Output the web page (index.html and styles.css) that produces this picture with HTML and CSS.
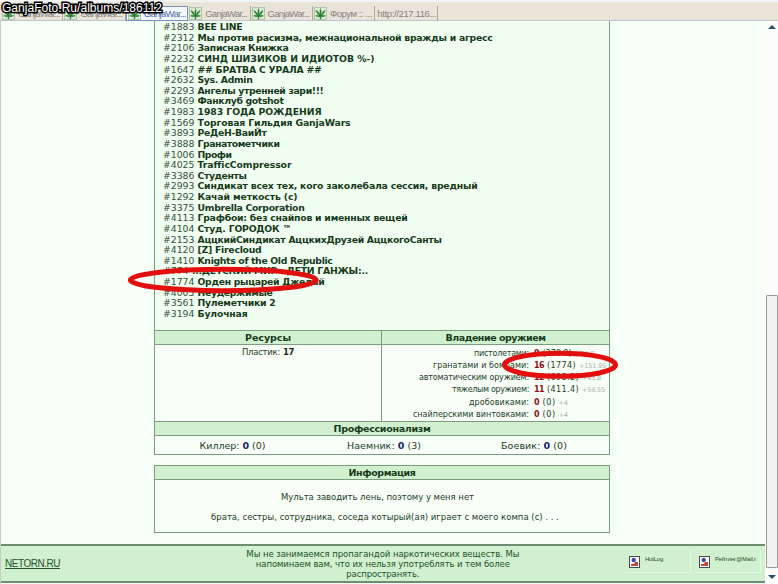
FILE: index.html
```html
<!DOCTYPE html>
<html lang="ru">
<head>
<meta charset="utf-8">
<title>GanjaWars</title>
<link rel="stylesheet" href="styles.css">
</head>
<body>
<svg width="0" height="0" class="defs"><defs>
<symbol id="leaf" viewBox="0 0 14 14"><rect x=".5" y=".5" width="13" height="13" fill="#d9ead5" stroke="#a9c4a5"/><path d="M7 1.5Q8.3 5 7.3 8.5Q9.5 4.5 12 3.5Q11 7 8.2 9.2Q10.5 8.3 12.5 9.5Q10 11 7.4 10.3L7.5 13H6.5L6.6 10.3Q4 11 1.5 9.5Q3.5 8.3 5.8 9.2Q3 7 2 3.5Q4.500 4.500 6.700 8.500Q5.700 5 7 1.500Z" fill="#287a2b" stroke="#287a2b" stroke-width=".4"/></symbol>
<symbol id="broken" viewBox="0 0 11 12"><rect x=".5" y=".5" width="10" height="11" fill="#fff" stroke="#474b50"/><circle cx="4.700" cy="4" r="2.200" fill="#4545b8"/><path d="M2 8h3l1-2h3v4H2z" fill="#c4453d"/></symbol>
</defs></svg>
<div class="tabs">
<div class="tab"><svg><use href="#leaf"/></svg><span data-w="42">GanjaWar...</span></div>
<div class="tab"><svg><use href="#leaf"/></svg><span data-w="42">GanjaWar...</span></div>
<div class="tab active"><svg><use href="#leaf"/></svg><span data-w="42">GanjaWar...</span></div>
<div class="tab"><svg><use href="#leaf"/></svg><span data-w="42">GanjaWar...</span></div>
<div class="tab"><svg><use href="#leaf"/></svg><span data-w="42">GanjaWar...</span></div>
<div class="tab"><svg><use href="#leaf"/></svg><span data-w="42">Форум :: ...</span></div>
<div class="tab plain"><span data-w="59">http://217.116...</span></div>
</div>
<div class="view">
<div class="page">
<main>
<section class="card profile">
<div class="list">
<div><i>#1883</i><b data-w="45">BEE LINE</b></div>
<div><i>#2312</i><b data-w="295">Мы против расизма, межнациональной вражды и агресс</b></div>
<div><i>#2106</i><b data-w="91">Записная Книжка</b></div>
<div><i>#2232</i><b data-w="177">СИНД ШИЗИКОВ И ИДИОТОВ %-)</b></div>
<div><i>#1647</i><b data-w="124">## БРАТВА С УРАЛА ##</b></div>
<div><i>#2632</i><b data-w="55">Sys. Admin</b></div>
<div><i>#2293</i><b data-w="126">Ангелы утренней зари!!!</b></div>
<div><i>#3469</i><b data-w="86">Фанклуб gotshot</b></div>
<div><i>#1983</i><b data-w="124">1983 ГОДА РОЖДЕНИЯ</b></div>
<div><i>#1569</i><b data-w="153">Торговая Гильдия GanjaWars</b></div>
<div><i>#3893</i><b data-w="69">РеДеН-ВаиЙт</b></div>
<div><i>#3888</i><b data-w="82">Гранатометчики</b></div>
<div><i>#1006</i><b data-w="34">Профи</b></div>
<div><i>#4025</i><b data-w="93">TrafficCompressor</b></div>
<div><i>#3386</i><b data-w="49">Студенты</b></div>
<div><i>#2993</i><b data-w="280">Синдикат всех тех, кого заколебала сессия, вредный</b></div>
<div><i>#1292</i><b data-w="100">Качай меткость (с)</b></div>
<div><i>#3375</i><b data-w="107">Umbrella Corporation</b></div>
<div><i>#4113</i><b data-w="210">Графбои: без снайпов и именных вещей</b></div>
<div><i>#4104</i><b data-w="94">Студ. ГОРОДОК ™</b></div>
<div><i>#2153</i><b data-w="244">АццкийСиндикат АццкихДрузей АццкогоСанты</b></div>
<div><i>#4120</i><b data-w="64">[Z] Firecloud</b></div>
<div><i>#1410</i><b data-w="135">Knights of the Old Republic</b></div>
<div class="short"><i>#774</i><b data-w="176">...ДЕТСКИЙ МИР - ДЕТИ ГАНЖЫ:..</b></div>
<div><i>#1774</i><b data-w="127">Орден рыцарей Джедай</b></div>
<div><i>#4005</i><b data-w="75">Неудержимые</b></div>
<div><i>#3561</i><b data-w="78">Пулеметчики 2</b></div>
<div><i>#3194</i><b data-w="50">Булочная</b></div>
</div>
<div class="cols">
<div class="col"><h2><span data-w="46">Ресурсы</span></h2><p class="res"><span data-w="38">Пластик:</span><b data-w="11">17</b></p></div>
<div class="col right"><h2><span data-w="100">Владение оружием</span></h2>
<div class="skills">
<div><label><span data-w="55">пистолетами:</span></label><b>9</b><span data-w="29">(270.9)</span><small>+29.7</small></div>
<div><label><span data-w="96">гранатами и бомбами:</span></label><b data-w="10">16</b><span data-w="29">(1774)</span><small data-w="27">+151.95</small></div>
<div><label><span data-w="110">автоматическим оружием:</span></label><b data-w="10">12</b><span data-w="32">(698.2)</span><small data-w="19">+43.8</small></div>
<div><label><span data-w="77">тяжелым оружием:</span></label><b data-w="10">11</b><span data-w="32">(411.4)</span><small data-w="23">+59.55</small></div>
<div><label><span data-w="60">дробовиками:</span></label><b>0</b><span data-w="13">(0)</span><small data-w="9">+4</small></div>
<div><label><span data-w="116">снайперскими винтовками:</span></label><b>0</b><span data-w="13">(0)</span><small data-w="9">+4</small></div>
</div></div>
</div>
<h2 class="prof"><span data-w="97">Профессионализм</span></h2>
<div class="jobs"><div><span data-w="66">Киллер: <b>0</b> (0)</span></div><div><span data-w="74">Наемник: <b>0</b> (3)</span></div><div><span data-w="66">Боевик: <b>0</b> (0)</span></div></div>
</section>
<section class="card info">
<h2><span data-w="67">Информация</span></h2>
<p class="p1"><span data-w="193">Мульта заводить лень, поэтому у меня нет</span></p>
<p class="p2"><span data-w="348">брата, сестры, сотрудника, соседа котырый(ая) играет с моего компа (с) . . .</span></p>
</section>
</main>
<footer>
<a><span data-w="55">NETORN.RU</span></a>
<div class="notice"><div><span data-w="273">Мы не занимаемся пропагандой наркотических веществ. Мы</span></div><div><span data-w="254">напоминаем вам, что их нельзя употреблять и тем более</span></div><div><span data-w="73">распространять.</span></div></div>
<div class="counters"><div><svg><use href="#broken"/></svg><span data-w="18">HotLog</span></div><div><svg><use href="#broken"/></svg><span data-w="41">Рейтинг@Mail.r</span></div></div>
</footer>
</div>
<div class="scroll"><svg class="arrow" viewBox="0 0 8 4"><path d="M0 4L4 0L8 4Z"/></svg><div class="thumb"></div><svg class="arrow" viewBox="0 0 8 4"><path d="M0 0L4 4L8 0Z"/></svg></div>
</div>
<svg class="marks" viewBox="0 0 778 584"><ellipse cx="223.300" cy="280" rx="93" ry="10.700"/><ellipse cx="560" cy="364.800" rx="55.500" ry="11.500"/></svg>
<div class="stamp"><span data-w="160">GanjaFoto.Ru/albums/186112</span></div>
<script src="fit.js"></script>
</body>
</html>
```
FILE: styles.css
```css
* { box-sizing: border-box; }
body { margin: 0; width: 778px; height: 584px; overflow: hidden; background: #f5fff5; font-family: "DejaVu Sans", sans-serif; color: #243d26; position: relative; }
.defs { position: absolute; }
span, b, i, small { white-space: nowrap; }
[data-w] { display: inline-block; }
.tabs { height: 21px; display: flex; padding: 4px 0 1px 1px; background: #e9e3d8; border-top: 2px solid #f2f3f3; border-bottom: 1px solid #c1c4d0; }
.tab { width: 62.4px; height: 15px; display: flex; align-items: center; gap: 3px; padding-left: 1px; border-right: 1px solid #aaa69c; font: 9.5px "Liberation Sans", sans-serif; color: #85837f; overflow: hidden; }
.tab svg { width: 13px; height: 13px; flex: none; }
.tab.active { background: #f4f8ff; color: #526ca0; border: 1px solid #7890bd; }
.tab.plain { padding-left: 2px; }
.view { display: flex; height: 563px; border-left: 1px solid #c3cfc6; }
.page { width: 764px; display: flex; flex-direction: column; }
main { height: 523px; padding-left: 153px; }
.card { width: 456px; border: 1px solid #789e7d; background: #f7fff7; }
.profile { height: 434px; border-top: 0; }
.list { height: 309px; padding: 1px 0 0 8px; background: #f0fff0; }
.list div { height: 10.630px; line-height: 10.630px; font-size: 9.3px; display: flex; white-space: nowrap; }
.list i { width: 34.5px; font-style: normal; letter-spacing: -.02px; color: #36503a; }
.list b { color: #173a1b; }
.list .short i { width: 29px; }
h2 { margin: 0; height: 15px; line-height: 14px; font-size: 9.5px; text-align: center; background: #d0f0d0; border: solid #789e7d; border-width: 1px 0; color: #173a1b; }
.cols { display: flex; height: 91px; }
.col { width: 226px; }
.col.right { flex: 1; border-left: 1px solid #789e7d; }
.res { margin: 2px 0 0; font-size: 8.500px; line-height: 11px; display: flex; gap: 3px; justify-content: center; }
.res b { color: #183018; }
.skills { padding-top: 3px; }
.skills > div { display: flex; height: 12.150px; line-height: 12.150px; font-size: 8px; gap: 3px; }
.skills label { width: 147px; text-align: right; margin-right: 2px; }
.skills b { color: #8d1018; }
.skills small { font-size: 6.500px; color: #a4b5a5; }
.prof { height: 15px; }
.jobs { height: 18px; display: grid; grid-template-columns: 153px 150px 150px; text-align: center; font-size: 9.5px; line-height: 19px; padding-left: 1px; }
.jobs b { color: #1b1b70; }
.info { margin-top: 10px; height: 68px; }
.info h2 { border-top: 0; height: 14px; }
.info p { margin: 0; text-align: center; font-size: 8.500px; line-height: 12px; }
.info .p1 { padding: 11px 9px 0 0; }
.info .p2 { padding: 8px 0 0 6px; }
footer { height: 39px; display: flex; background: #d0f0d0; border: solid #6c8e70; border-width: 2px 0; color: #245328; }
footer a { width: 234px; padding: 11px 0 0 4px; font: 10px/14px "Liberation Sans", sans-serif; text-decoration: underline; }
footer a span { text-decoration: underline; }
.notice { width: 300px; padding-top: 3px; text-align: center; font-size: 8.500px; line-height: 10px; }
.notice div { height: 10px; }
.counters { flex: 1; display: flex; padding: 5px 3px 8px 90px; font: 6px "Liberation Sans", sans-serif; }
.counters > div { display: flex; gap: 5px; padding: 5px 0 0 4px; width: 66px; border-right: 1px solid #e4fae4; border-bottom: 1px solid #e4fae4; margin-right: 4px; flex: none; }
.counters svg { width: 11px; height: 12px; flex: none; }
.scroll { width: 13px; background: #fcfcfc; display: flex; flex-direction: column; align-items: center; }
.arrow { width: 8px; height: 4px; margin-top: 4px; fill: #284f70; }
.thumb { width: 12px; height: 273px; margin: 266px 0 3px; background: #f2f2f4; border: 1px solid #999; border-radius: 1px; flex: none; }
.marks { position: absolute; inset: 0; width: 778px; height: 584px; fill: none; stroke: #e30f0f; stroke-width: 5px; pointer-events: none; }
.stamp { position: absolute; left: 2px; top: 1px; font: 12px/14px "Liberation Sans", sans-serif; color: #fff; -webkit-text-stroke: 3px #000; paint-order: stroke fill; }
.counters > div:first-child { margin-left: 0; }
.counters { padding-left: 93px; padding-right: 0; }
```
FILE: fit.js
```js
document.querySelectorAll('[data-w]').forEach(function (el) {
  var natural = el.getBoundingClientRect().width;
  var gap = (Number(el.dataset.w) - natural) / el.textContent.length;
  el.style.letterSpacing = gap.toFixed(3) + 'px';
});
```
